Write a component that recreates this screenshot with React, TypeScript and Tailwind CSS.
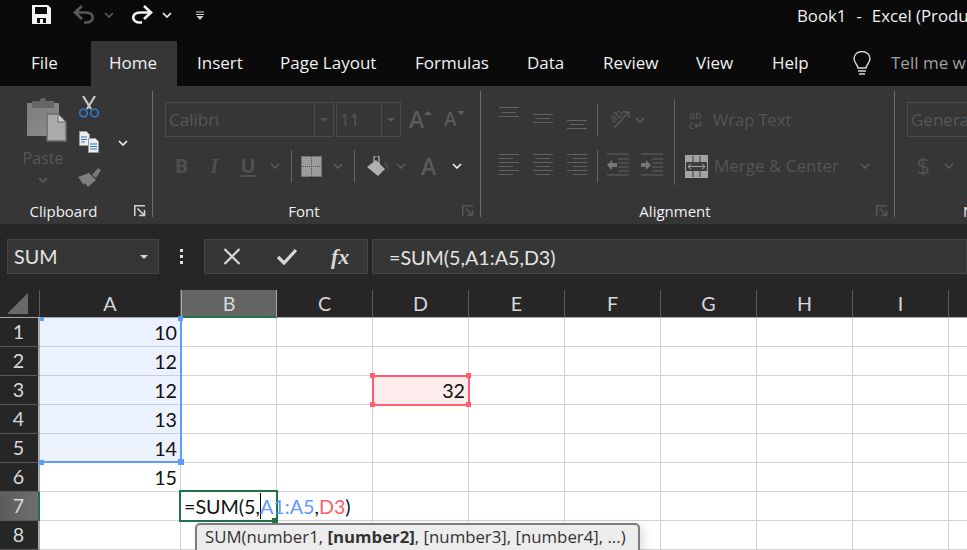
import React from "react";

const UI = "font-['Open_Sans','Noto_Sans',sans-serif]";
const CELL = "font-['Lato','Noto_Sans',sans-serif]";

function Chevron({ color = "#5c5c5c", className = "" }: { color?: string; className?: string }) {
  return (
    <svg width="10" height="6" viewBox="0 0 10 6" className={className}>
      <polyline points="1,1 5,5 9,1" fill="none" stroke={color} strokeWidth="1.6" />
    </svg>
  );
}

function Lines({ w, h, items, color = "#626262" }: { w: number; h: number; items: [number, number, number][]; color?: string }) {
  return (
    <svg width={w} height={h} viewBox={`0 0 ${w} ${h}`} className="shrink-0">
      {items.map(([x1, x2, y], i) => (
        <line key={i} x1={x1} x2={x2} y1={y + 0.5} y2={y + 0.5} stroke={color} strokeWidth="1" />
      ))}
    </svg>
  );
}

function Launcher({ color }: { color: string }) {
  return (
    <svg width="12" height="12" viewBox="0 0 12 12" className="shrink-0">
      <path d="M0.75 11V0.75H11" fill="none" stroke={color} strokeWidth="1.5" />
      <path d="M3.5 3.5L10 10M10.5 5V10.5H5" fill="none" stroke={color} strokeWidth="1.6" />
    </svg>
  );
}

function Label({ text, launcher }: { text: string; launcher: string }) {
  return (
    <div className="h-[26px] flex items-center mt-auto">
      <div className="flex-1 text-center text-[15px] leading-[26px] text-[#f0f0f0]">{text}</div>
      <div className="w-[25px] flex justify-start pl-[7px]">
        <Launcher color={launcher} />
      </div>
    </div>
  );
}

function VSep({ className }: { className: string }) {
  return <div className={"w-px shrink-0 bg-[#6c6c6c] " + className} />;
}

function Combo({ text, w, color = "text-[#565656]" }: { text: string; w: string; color?: string }) {
  return (
    <div className={"h-[35px] border border-[#4b4b4b] flex " + w}>
      <div className={"flex-1 pl-[3px] text-[17px] leading-[33px] " + color}>{text}</div>
      <div className="w-[19px] border-l border-[#4b4b4b] flex items-center justify-center">
        <div className="w-0 h-0 border-x-[4px] border-x-transparent border-t-[4px] border-t-[#565656]" />
      </div>
    </div>
  );
}

function TriA({ size, up }: { size: string; up: boolean }) {
  return (
    <div className={"flex items-start " + (up ? "ml-[8px] w-[35px]" : "w-[30px]")}>
      <span className={"font-semibold text-[#5a5a5a] leading-[35px] " + size}>A</span>
      <div
        className={
          up
            ? "w-0 h-0 mt-[9px] border-x-[4px] border-x-transparent border-b-[4px] border-b-[#5f5f5f]"
            : "w-0 h-0 mt-[9px] border-x-[4px] border-x-transparent border-t-[4px] border-t-[#5f5f5f]"
        }
      />
    </div>
  );
}

function Clipboard() {
  return (
    <div className="w-[152px] h-full shrink-0 flex flex-col">
      <div className="flex h-[112px]">
        <div className="w-[75px] flex flex-col items-center pl-[11px] pt-[11px]">
          <svg width="41" height="45" viewBox="0 0 41 45" className="ml-[7px]">
            <defs>
              <linearGradient id="pg" x1="0" x2="1" y1="0" y2="1">
                <stop offset="0" stopColor="#7c7c7c" />
                <stop offset="1" stopColor="#8e8e8e" />
              </linearGradient>
            </defs>
            <path d="M1 6h32v33H1z" fill="url(#pg)" />
            <path d="M6 4h8a3 3 0 0 1 6 0h8v7H6z" fill="#666" />
            <path d="M21 17h11l8 8v19H21z" fill="#aaa" stroke="#6b6b6b" strokeWidth="1.5" />
            <path d="M32 17v8h8z" fill="#cfcfcf" stroke="#6b6b6b" />
          </svg>
          <div className="text-[16px] leading-[22px] mt-[5px] text-[#565656]">Paste</div>
          <Chevron className="mt-[8px]" />
        </div>
        <div className="w-[28px] flex flex-col items-center pt-[10px]">
          <svg width="20" height="22" viewBox="0 0 20 22">
            <path d="M4 0l8 13M16 0L8 13" stroke="#c8c8c8" strokeWidth="2.2" fill="none" />
            <circle cx="4.5" cy="17" r="3.8" fill="none" stroke="#2f79c9" strokeWidth="1.7" />
            <circle cx="15.5" cy="17" r="3.8" fill="none" stroke="#2f79c9" strokeWidth="1.7" />
          </svg>
          <svg width="20" height="22" viewBox="0 0 20 22" className="mt-[13px]">
            <path d="M0.5 0.5h7l3 3v11H0.5z" fill="#eee" stroke="#999" />
            <path d="M2 6h6M2 8.500h6M2 11h4" stroke="#2f79c9" />
            <path d="M9.500 7.500h7l3 3v11H9.500z" fill="#eee" stroke="#999" />
            <path d="M11 13h7M11 15.500h7M11 18h7" stroke="#2f79c9" />
          </svg>
          <svg width="23" height="20" viewBox="0 0 23 20" className="mt-[14px]">
            <path d="M14 8l6-7 3 2-5 8z" fill="#767676" />
            <path d="M0 10l11-4 7 7-8 7-3-4-1 2z" fill="#7e7e7e" />
          </svg>
        </div>
        <div className="flex-1 flex items-start justify-start pl-[15px] pt-[54px]">
          <Chevron color="#f2f2f2" />
        </div>
      </div>
      <Label text="Clipboard" launcher="#d4d4d4" />
    </div>
  );
}

function FontGroup() {
  return (
    <div className="w-[327px] h-full shrink-0 flex flex-col">
      <div className="pl-[12px] pt-[16px] flex h-[51px]">
        <Combo text="Calibri" w="w-[169px]" />
        <div className="w-[2px]" />
        <Combo text="11" w="w-[65px]" />
        <TriA size="text-[23px]" up />
        <TriA size="text-[19px]" up={false} />
      </div>
      <div className="pl-[12px] mt-[13px] flex items-center h-[32px] text-[#505050]">
        <div className="w-[33px] text-center font-bold text-[20px]">B</div>
        <div className="w-[33px] text-center italic font-bold text-[20px] font-['Liberation_Serif',serif]">I</div>
        <div className="w-[34px] text-center font-bold text-[20px] underline underline-offset-2">U</div>
        <div className="w-[20px] flex justify-center"><Chevron /></div>
        <div className="w-[6px]" />
        <VSep className="h-[32px] bg-[#646464]" />
        <div className="w-[9px]" />
        <svg width="21" height="21" viewBox="0 0 21 21">
          <rect width="21" height="21" fill="#9c9c9c" />
          <path d="M0.5 0.5h20v20h-20zM10.5 0v21M0 10.5h21" fill="none" stroke="#4f4f4f" strokeDasharray="1 1" />
        </svg>
        <div className="w-[32px] flex justify-center"><Chevron /></div>
        <VSep className="h-[32px] bg-[#646464]" />
        <div className="w-[12px]" />
        <svg width="23" height="21" viewBox="0 0 23 21">
          <path d="M0 11L9 4l9 9-7 7z" fill="#b0b0b0" />
          <path d="M7 6V2a2.500 2.500 0 0 1 5 0v6" fill="none" stroke="#b0b0b0" strokeWidth="1.3" />
          <path d="M17 5c4 2 6 6 4 11-1-4-2-7-4-8z" fill="#4a4a4a" />
        </svg>
        <div className="w-[22px] flex justify-center"><Chevron /></div>
        <div className="w-[38px] pl-[9px] font-semibold text-[23px] leading-[32px] text-[#5a5a5a]">A</div>
        <div className="w-[14px] flex justify-center"><Chevron color="#f2f2f2" /></div>
      </div>
      <Label text="Font" launcher="#565656" />
    </div>
  );
}

function Alignment() {
  const full: [number, number, number][] = [
    [0, 20, 4], [0, 14, 8], [0, 20, 12], [0, 14, 16], [0, 20, 20], [0, 14, 24],
  ];
  const center: [number, number, number][] = [
    [0, 20, 4], [3, 17, 8], [0, 20, 12], [3, 17, 16], [0, 20, 20], [3, 17, 24],
  ];
  const right: [number, number, number][] = [
    [0, 20, 4], [6, 20, 8], [0, 20, 12], [6, 20, 16], [0, 20, 20], [6, 20, 24],
  ];
  return (
    <div className="w-[413px] h-full shrink-0 flex flex-col">
      <div className="flex h-[99px]">
        <div className="w-[193px] shrink-0 pl-[18px] pt-[18px]">
          <div className="flex items-start h-[32px]">
            <Lines w={20} h={32} items={[[0, 20, 3], [3, 17, 8], [0, 20, 12]]} />
            <div className="w-[14px]" />
            <Lines w={20} h={32} items={[[0, 20, 10], [3, 17, 14], [0, 20, 18]]} />
            <div className="w-[14px]" />
            <Lines w={20} h={32} items={[[0, 20, 16], [3, 17, 20], [0, 20, 24]]} />
            <div className="w-[10px]" />
            <VSep className="h-[32px] bg-[#646464]" />
            <div className="w-[11px]" />
            <svg width="21" height="32" viewBox="0 0 21 32">
              <text x="1" y="17" fontSize="12" fill="#5c5c5c" transform="rotate(-40 6 14)">ab</text>
              <path d="M5 24L19 9M14 8h6v6" fill="none" stroke="#5c5c5c" strokeWidth="1.3" />
            </svg>
            <div className="w-[20px] h-[32px] flex items-center justify-center"><Chevron /></div>
          </div>
          <div className="flex items-start h-[32px] mt-[14px]">
            <Lines w={20} h={28} items={full} />
            <div className="w-[14px]" />
            <Lines w={20} h={28} items={center} />
            <div className="w-[14px]" />
            <Lines w={20} h={28} items={right} />
            <div className="w-[10px]" />
            <VSep className="h-[32px] bg-[#646464]" />
            <div className="w-[9px]" />
            <svg width="23" height="28" viewBox="0 0 23 28">
              <path d="M0 4h22M11 9h11M11 13h11M11 17h11M11 21h11M0 25h22" stroke="#626262" />
              <path d="M0 15l5-5v3h5v4H5v3z" fill="#777" />
            </svg>
            <div className="w-[11px]" />
            <svg width="23" height="28" viewBox="0 0 23 28">
              <path d="M0 4h22M11 9h11M11 13h11M11 17h11M11 21h11M0 25h22" stroke="#626262" />
              <path d="M10 15l-5-5v3H0v4h5v3z" fill="#777" />
            </svg>
          </div>
        </div>
        <VSep className="h-[85px] mt-[14px] bg-[#646464]" />
        <div className="flex-1 text-[#555]">
          <div className="flex items-center h-[32px] mt-[18px] pl-[14px] text-[16.5px]">
            <div className="w-[18px] text-[11px] leading-[10px] text-[#5c5c5c]">
              <div className="h-[10px]">ab</div>
              <div className="h-[10px]">c↵</div>
            </div>
            <div className="ml-[6px]">Wrap Text</div>
          </div>
          <div className="flex items-center h-[32px] mt-[14px] pl-[10px] text-[17px]">
            <svg width="23" height="23" viewBox="0 0 23 23" className="shrink-0">
              <rect width="23" height="23" fill="#a3a3a3" />
              <rect x="1" y="7" width="21" height="9" fill="#3d3d3d" />
              <path d="M8 1v6M15 1v6M8 16v6M15 16v6" stroke="#3d3d3d" />
              <path d="M3 11.500h17M6 9l-3 2.500L6 14M17 9l3 2.500L17 14" fill="none" stroke="#a3a3a3" />
            </svg>
            <div className="ml-[6px] w-[146px] whitespace-nowrap">Merge &amp; Center</div>
            <Chevron />
          </div>
        </div>
      </div>
      <Label text="Alignment" launcher="#565656" />
    </div>
  );
}

function NumberGroup() {
  return (
    <div className="w-[150px] h-full shrink-0 flex flex-col pl-[12px]">
      <div className="mt-[16px] w-[150px] h-[35px] border border-[#4b4b4b] pl-[3px] text-[17px] leading-[33px] text-[#565656]">General</div>
      <div className="mt-[13px] h-[32px] flex items-center text-[#505050]">
        <div className="w-[23px] text-right text-[24px] leading-[32px]">$</div>
        <div className="w-[24px] flex justify-end"><Chevron /></div>
      </div>
      <div className="mt-auto h-[26px] ml-[56px] text-[15px] leading-[26px] text-[#f0f0f0]">N</div>
    </div>
  );
}

const tabs: { t: string; w: string }[] = [
  { t: "File", w: "w-[91px] pl-[31px]" },
  { t: "Home", w: "w-[86px] pl-[18px] bg-[#363636]" },
  { t: "Insert", w: "w-[103px] pl-[20px]" },
  { t: "Page Layout", w: "w-[135px]" },
  { t: "Formulas", w: "w-[112px]" },
  { t: "Data", w: "w-[76px]" },
  { t: "Review", w: "w-[93px]" },
  { t: "View", w: "w-[76px]" },
  { t: "Help", w: "w-[81px]" },
];

const cols = ["A", "B", "C", "D", "E", "F", "G", "H", "I", "J"];
const colW = [
  "w-[141px]", "w-[96px]", "w-[96px]", "w-[96px]", "w-[96px]",
  "w-[96px]", "w-[96px]", "w-[96px]", "w-[96px]", "w-[96px]",
];
const aVals = ["10", "12", "12", "13", "14", "15", "", ""];

function Grid() {
  return (
    <div className={"relative " + CELL}>
      <div className="flex h-[28px] bg-[#262626] border-b border-[#a8a8a8]">
        <div className="w-[40px] shrink-0 border-r border-[#5c5c5c] flex items-center justify-center">
          <div className="w-0 h-0 -ml-[4px] border-l-[21px] border-l-transparent border-b-[21px] border-b-[#6a6a6a]" />
        </div>
        {cols.map((c, i) => (
          <div
            key={c}
            className={
              colW[i] +
              " shrink-0 text-center text-[19.7px] leading-[28px] text-[#d8d8d8] " +
              (c === "B"
                ? "bg-[#646464] border-x border-[#a8a8a8] border-b-2 border-b-[#217346] h-[28px] leading-[27px]"
                : "border-r border-[#5c5c5c]")
            }
          >
            {c}
          </div>
        ))}
      </div>
      {aVals.map((v, r) => (
        <div key={r} className="flex h-[29px]">
          <div
            className={
              "w-[40px] shrink-0 text-center pr-[1px] text-[19.7px] leading-[28px] text-[#d8d8d8] border-b border-b-[#5a5a5a] " +
              (r === 6
                ? "bg-gradient-to-r from-[#5c5c5c] to-[#6e6e6e] border-r-2 border-r-[#217346]"
                : "bg-[#262626] border-r-2 border-r-[#a8a8a8]")
            }
          >
            {r + 1}
          </div>
          {cols.map((c, i) => (
            <div
              key={c}
              className={
                colW[i] +
                " shrink-0 border-r border-b text-right text-[19.7px] leading-[29px] text-[#111] pr-[3px] overflow-hidden " +
                (c === "A" && r < 5
                  ? "bg-[#ebf2fe] border-[#c6cfdd]"
                  : c === "D" && r === 2
                    ? "bg-[#ffecec] border-[#d2d2d2]"
                    : "bg-white border-[#d2d2d2]")
              }
            >
              {c === "A" ? v : c === "D" && r === 2 ? "32" : ""}
            </div>
          ))}
        </div>
      ))}

      {/* A1:A5 reference highlight */}
      <div className="absolute left-[40px] top-[27px] w-[142px] h-[146px] border-r-2 border-b-2 border-[#5f9aff] pointer-events-none" />
      <div className="absolute left-[40px] top-[27px] w-[4px] h-[4px] bg-[#5f9aff]" />
      <div className="absolute left-[178px] top-[26px] w-[5px] h-[5px] bg-[#5f9aff]" />
      <div className="absolute left-[39px] top-[170px] w-[5px] h-[5px] bg-[#5f9aff]" />
      <div className="absolute left-[178px] top-[169px] w-[6px] h-[6px] bg-[#5f9aff]" />

      {/* D3 reference highlight */}
      <div className="absolute left-[372px] top-[85px] w-[98px] h-[31px] border-2 border-[#ff5f6d] pointer-events-none" />
      <div className="absolute left-[370px] top-[83px] w-[5px] h-[5px] bg-[#ff5f6d]" />
      <div className="absolute left-[466px] top-[83px] w-[5px] h-[5px] bg-[#ff5f6d]" />
      <div className="absolute left-[370px] top-[112px] w-[5px] h-[5px] bg-[#ff5f6d]" />
      <div className="absolute left-[466px] top-[112px] w-[5px] h-[5px] bg-[#ff5f6d]" />

      {/* in-cell editor */}
      <div className="absolute left-[179px] top-[200px] w-[99px] h-[32px] border-2 border-[#217346] bg-white" />
      <div className="absolute left-[272px] top-[228px] w-[6px] h-[5px] bg-[#217346]" />
      <div className="absolute left-[184px] top-[201px] h-[30px] whitespace-nowrap text-[19.7px] leading-[32px] text-[#111] flex">
        <span>=SUM(5,</span>
        <span className="w-px h-[26px] mt-[2px] bg-black -mr-px" />
        <span className="text-[#5f9aff]">A1:A5</span>
        <span>,</span>
        <span className="text-[#ff5f6d]">D3</span>
        <span>)</span>
      </div>

      {/* argument tooltip */}
      <div
        className={
          "absolute left-[195px] top-[233px] w-[445px] h-[40px] rounded-[5px] border-2 border-[#7d7d7d] bg-[#ececec] shadow-[4px_2px_8px_rgba(0,0,0,0.12)] pl-[8px] text-[16.8px] leading-[24px] text-[#333] whitespace-nowrap " +
          UI
        }
      >
        SUM(number1, <b className="font-bold">[number2]</b>, [number3], [number4], ...)
      </div>
    </div>
  );
}

export default function App() {
  return (
    <div className={"w-[967px] h-[550px] overflow-hidden bg-[#262626] flex flex-col " + UI}>
      {/* quick access + title */}
      <div className="h-[41px] shrink-0 bg-[#0a0a0a] flex items-start whitespace-nowrap">
        <svg width="19" height="19" viewBox="0 0 19 19" className="ml-[32px] mt-[5px] shrink-0">
          <path
            fillRule="evenodd"
            d="M0 0h16l3 3v16H0zM3 2v7h12V2zM5 13v5h9v-5zM8 14h3v4H8z"
            fill="#f4f4f4"
          />
        </svg>
        <svg width="22" height="20" viewBox="0 0 22 20" className="ml-[22px] mt-[5px] shrink-0">
          <path d="M9 1L2 7.500l7 6.500M2 7.500h11c9 0 9 10 0 10h-2" fill="none" stroke="#5a5a5a" strokeWidth="2.6" />
        </svg>
        <Chevron className="ml-[9px] mt-[12px] shrink-0" />
        <svg width="22" height="20" viewBox="0 0 22 20" className="ml-[17px] mt-[5px] shrink-0">
          <path d="M13 1l7 6.500-7 6.500M20 7.500H9c-9 0-9 10 0 10h2" fill="none" stroke="#f4f4f4" strokeWidth="2.6" />
        </svg>
        <Chevron color="#f4f4f4" className="ml-[9px] mt-[12px] shrink-0" />
        <svg width="10" height="9" viewBox="0 0 10 9" className="ml-[23px] mt-[11px] shrink-0">
          <path d="M1 1h8M1 3.500h8" stroke="#cfcfcf" strokeWidth="1.1" />
          <path d="M1.500 5h7L5 9z" fill="#cfcfcf" />
        </svg>
        <div className="ml-[592px] text-[16.8px] leading-[32px] text-[#f0f0f0] shrink-0">
          Book1<span className="mx-[10px]">-</span>Excel (Produ
        </div>
      </div>

      {/* tabs */}
      <div className="h-[45px] shrink-0 bg-[#0a0a0a] flex items-stretch whitespace-nowrap text-[17px] leading-[43px] text-[#f0f0f0]">
        {tabs.map((t) => (
          <div key={t.t} className={"shrink-0 " + t.w}>{t.t}</div>
        ))}
        <svg width="18" height="25" viewBox="0 0 18 25" className="mt-[10px] shrink-0">
          <path d="M5 17c0-3-4-5-4-9.500a8 7 0 0 1 16 0C17 12 13 14 13 17z" fill="none" stroke="#d8d8d8" strokeWidth="1.4" />
          <path d="M5 20h8M6 23h6" stroke="#d8d8d8" strokeWidth="1.6" />
        </svg>
        <div className="ml-[20px] text-[#a0a0a0] shrink-0">Tell me wh</div>
      </div>

      {/* ribbon */}
      <div className="h-[138px] shrink-0 bg-[#363636] flex whitespace-nowrap">
        <Clipboard />
        <VSep className="h-[126px] mt-[5px]" />
        <FontGroup />
        <VSep className="h-[126px] mt-[5px]" />
        <Alignment />
        <VSep className="h-[126px] mt-[5px]" />
        <NumberGroup />
      </div>

      {/* formula bar */}
      <div className={"h-[66px] shrink-0 pt-[15px] flex items-start text-[#e4e4e4] whitespace-nowrap " + CELL}>
        <div className="ml-[7px] w-[152px] h-[35px] bg-[#363636] border border-[#454545] flex items-center pl-[6px] pr-[10px] text-[19.7px]">
          <span className="flex-1">SUM</span>
          <div className="w-0 h-0 border-x-[4px] border-x-transparent border-t-[4px] border-t-[#d8d8d8]" />
        </div>
        <div className="w-[45px] h-[35px] flex flex-col items-center justify-center gap-[3px]">
          <div className="w-[3px] h-[3px] bg-[#e0e0e0]" />
          <div className="w-[3px] h-[3px] bg-[#e0e0e0]" />
          <div className="w-[3px] h-[3px] bg-[#e0e0e0]" />
        </div>
        <div className="w-[164px] h-[35px] bg-[#363636] border border-[#454545] flex items-center">
          <svg width="18" height="17" viewBox="0 0 18 17" className="ml-[18px]">
            <path d="M1.500 1L16.500 16M16.500 1L1.500 16" stroke="#d8d8d8" strokeWidth="2.2" />
          </svg>
          <svg width="20" height="17" viewBox="0 0 20 17" className="ml-[36px]">
            <path d="M1 9l6 6L19 2" fill="none" stroke="#d8d8d8" strokeWidth="3.200" />
          </svg>
          <span className="ml-[34px] text-[22px] leading-[30px] italic font-bold text-[#d8d8d8] font-['Liberation_Serif',serif]">fx</span>
        </div>
        <div className="ml-[4px] flex-1 h-[35px] bg-[#363636] border border-[#454545] pl-[16px] text-[19.7px] leading-[35px]">=SUM(5,A1:A5,D3)</div>
      </div>

      <Grid />
    </div>
  );
}
